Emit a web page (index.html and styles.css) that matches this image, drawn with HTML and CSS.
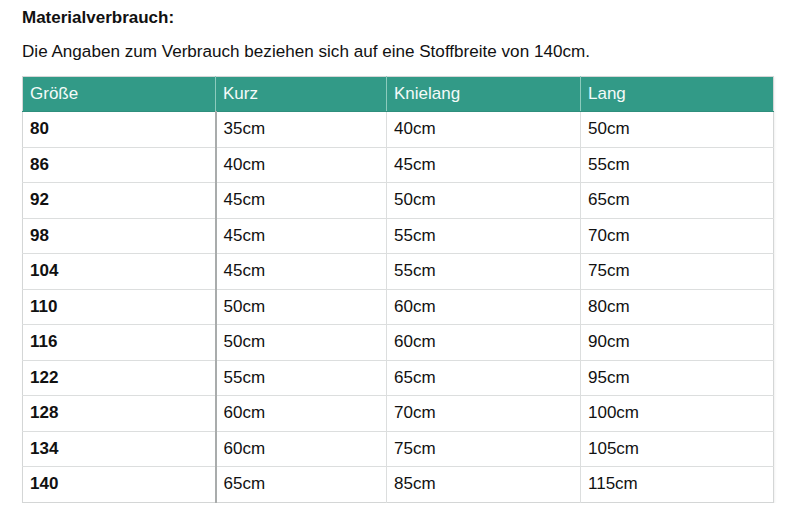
FILE: index.html
```html
<!DOCTYPE html>
<html lang="de">
<head>
<meta charset="utf-8">
<title>Materialverbrauch</title>
<link rel="stylesheet" href="styles.css">
</head>
<body>
<div class="page">
  <h2 class="title">Materialverbrauch:</h2>
  <p class="intro">Die Angaben zum Verbrauch beziehen sich auf eine Stoffbreite von 140cm.</p>
  <table class="sizes">
    <colgroup>
      <col class="c1"><col class="c2"><col class="c3"><col class="c4">
    </colgroup>
    <thead>
      <tr><th>Größe</th><th>Kurz</th><th>Knielang</th><th>Lang</th></tr>
    </thead>
    <tbody>
      <tr><td>80</td><td>35cm</td><td>40cm</td><td>50cm</td></tr>
      <tr><td>86</td><td>40cm</td><td>45cm</td><td>55cm</td></tr>
      <tr><td>92</td><td>45cm</td><td>50cm</td><td>65cm</td></tr>
      <tr><td>98</td><td>45cm</td><td>55cm</td><td>70cm</td></tr>
      <tr><td>104</td><td>45cm</td><td>55cm</td><td>75cm</td></tr>
      <tr><td>110</td><td>50cm</td><td>60cm</td><td>80cm</td></tr>
      <tr><td>116</td><td>50cm</td><td>60cm</td><td>90cm</td></tr>
      <tr><td>122</td><td>55cm</td><td>65cm</td><td>95cm</td></tr>
      <tr><td>128</td><td>60cm</td><td>70cm</td><td>100cm</td></tr>
      <tr><td>134</td><td>60cm</td><td>75cm</td><td>105cm</td></tr>
      <tr><td>140</td><td>65cm</td><td>85cm</td><td>115cm</td></tr>
    </tbody>
  </table>
</div>
</body>
</html>
```

FILE: styles.css
```css
html, body {
  margin: 0;
  padding: 0;
  background: #ffffff;
}
body {
  font-family: "Liberation Sans", Arial, Helvetica, sans-serif;
  color: #111111;
}
.page {
  padding: 8px 0 0 22px;
}
.title {
  margin: 0;
  font-size: 17px;
  font-weight: bold;
  line-height: 20px;
}
.intro {
  margin: 14px 0 0 0;
  font-size: 17.1px;
  line-height: 20px;
}
.sizes {
  margin-top: 14px;
  border-collapse: collapse;
  width: 751px;
  table-layout: fixed;
  border: 1px solid #d4d6d6;
  box-shadow: 1px 1px 2px rgba(0,0,0,0.06);
}
.c1 { width: 193px; }
.c2 { width: 171px; }
.c3 { width: 194px; }
.c4 { width: 193px; }
.sizes th {
  background: #329a87;
  color: #f4fbf9;
  font-weight: normal;
  text-align: left;
  font-size: 17px;
  height: 34px;
  padding: 0 7px;
  border-left: 1px solid #8ccbbd;
  border-bottom: 1px solid #2f8f7d;
}
.sizes th:first-child { border-left: none; }
.sizes td {
  font-size: 17px;
  height: 34.5px;
  padding: 0 7px;
  border-top: 1px solid #dcdede;
  border-left: 1px solid #dcdede;
}
.sizes td:first-child {
  font-weight: bold;
  border-left: none;
  border-right: 2px solid #a9acac;
}
.sizes tbody tr:first-child td { border-top: none; }
```
